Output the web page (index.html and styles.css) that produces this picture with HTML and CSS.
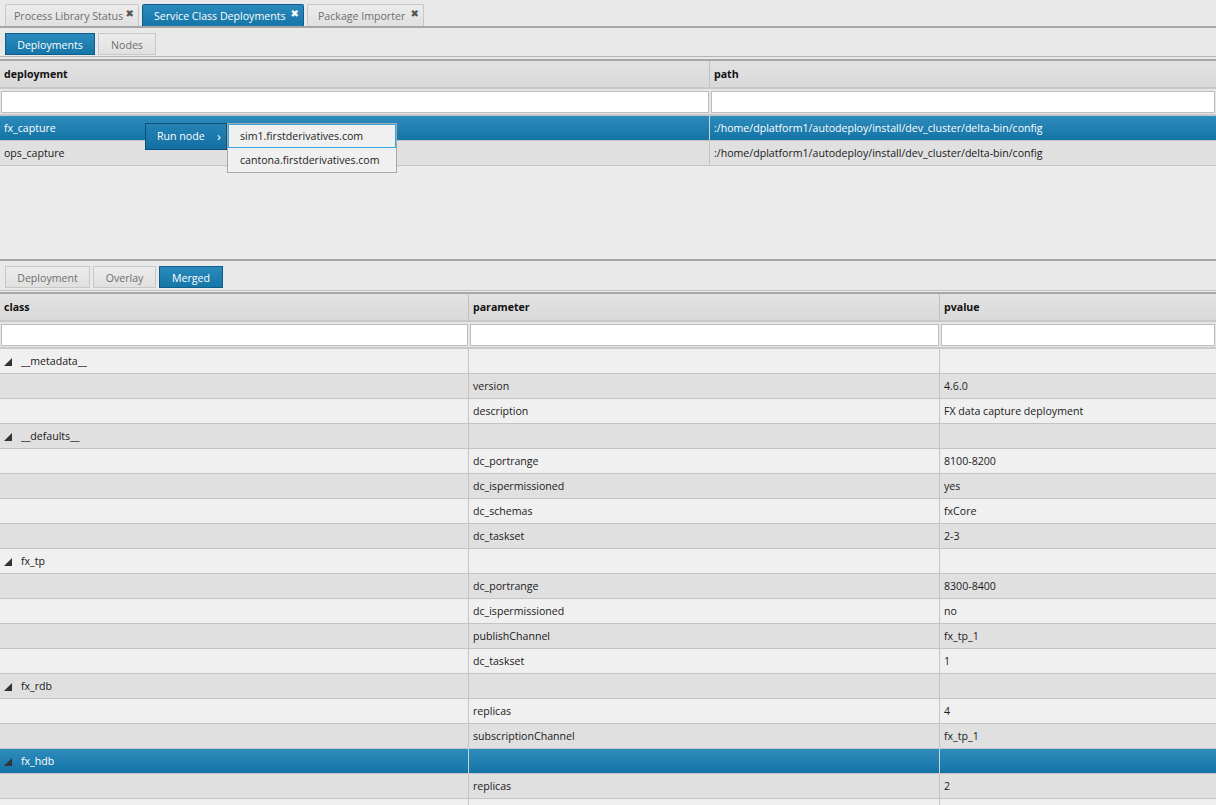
FILE: index.html
```html
<!DOCTYPE html>
<html>
<head>
  <title>Service Class Deployments</title>
  <link rel="stylesheet" href="styles.css">
</head>
<body>

<div class="tabbar main-tabs">
  <div class="tab"><span>Process Library Status</span><span class="close">&#10006;</span></div>
  <div class="tab active"><span>Service Class Deployments</span><span class="close">&#10006;</span></div>
  <div class="tab"><span>Package Importer</span><span class="close">&#10006;</span></div>
</div>

<div class="tabbar sub-tabs">
  <div class="tab active">Deployments</div>
  <div class="tab">Nodes</div>
</div>

<!-- deployments grid -->
<div class="grid top-grid">
  <div class="row head">
    <div class="cell">deployment</div>
    <div class="cell">path</div>
  </div>
  <div class="row filter">
    <div class="cell"><div class="input"></div></div>
    <div class="cell"><div class="input"></div></div>
  </div>
  <div class="row selected">
    <div class="cell">fx_capture</div>
    <div class="cell">:/home/dplatform1/autodeploy/install/dev_cluster/delta-bin/config</div>
  </div>
  <div class="row dark">
    <div class="cell">ops_capture</div>
    <div class="cell">:/home/dplatform1/autodeploy/install/dev_cluster/delta-bin/config</div>
  </div>
</div>

<div class="tabbar lower-tabs">
  <div class="tab">Deployment</div>
  <div class="tab">Overlay</div>
  <div class="tab active">Merged</div>
</div>

<!-- merged parameters grid -->
<div class="grid bottom-grid" id="paramGrid">
  <div class="row head">
    <div class="cell">class</div>
    <div class="cell">parameter</div>
    <div class="cell">pvalue</div>
  </div>
  <div class="row filter">
    <div class="cell"><div class="input"></div></div>
    <div class="cell"><div class="input"></div></div>
    <div class="cell"><div class="input"></div></div>
  </div>
</div>

<!-- context menu -->
<div class="menu">
  <div class="menu-item">Run node <span class="arrow">&rsaquo;</span></div>
  <div class="submenu">
    <div class="sub-item hover">sim1.firstderivatives.com</div>
    <div class="sub-item">cantona.firstderivatives.com</div>
  </div>
</div>

<script>
  // rows of the merged view: groups have no parameter
  const rows = [
    ['__metadata__'],
    ['', 'version', '4.6.0'],
    ['', 'description', 'FX data capture deployment'],
    ['__defaults__'],
    ['', 'dc_portrange', '8100-8200'],
    ['', 'dc_ispermissioned', 'yes'],
    ['', 'dc_schemas', 'fxCore'],
    ['', 'dc_taskset', '2-3'],
    ['fx_tp'],
    ['', 'dc_portrange', '8300-8400'],
    ['', 'dc_ispermissioned', 'no'],
    ['', 'publishChannel', 'fx_tp_1'],
    ['', 'dc_taskset', '1'],
    ['fx_rdb'],
    ['', 'replicas', '4'],
    ['', 'subscriptionChannel', 'fx_tp_1'],
    ['fx_hdb', null, null, true],
    ['', 'replicas', '2'],
    ['', '', '']
  ];

  const grid = document.getElementById('paramGrid');
  rows.forEach((r, i) => {
    const row = document.createElement('div');
    row.className = 'row ' + (r[3] ? 'selected' : (i % 2 ? 'dark' : 'light'));
    const first = document.createElement('div');
    first.className = 'cell';
    if (r.length === 1 || r[3]) {
      first.innerHTML = '<svg class="tri" width="8" height="8" viewBox="0 0 8 8"><polygon points="8,0 8,8 0,8"/></svg>' + r[0];
    }
    row.appendChild(first);
    for (let k = 1; k < 3; k++) {
      const c = document.createElement('div');
      c.className = 'cell';
      c.textContent = r[k] || '';
      row.appendChild(c);
    }
    grid.appendChild(row);
  });
</script>

</body>
</html>
```

FILE: styles.css
```css
/* Page */
body {
  margin: 0;
  width: 1216px;
  height: 805px;
  overflow: hidden;
  background-color: #e9e9e9;
  font-family: "Open Sans", "Noto Sans", sans-serif;
  font-size: 10.6px;
  color: #1a1a1a;
  position: relative;
}

/* Tab bars */
.tabbar {
  display: flex;
  align-items: flex-end;
  gap: 3px;
  padding-left: 5px;
  box-sizing: border-box;
}
.main-tabs {
  height: 28px;
  border-bottom: 2px solid #a6a6a6;
}
.sub-tabs {
  height: 29px;
  border-bottom: 1px solid #b4b4b4;
  background-color: #e9e9e9;
}
.lower-tabs {
  height: 32px;
  border-top: 2px solid #a6a6a6;
  border-bottom: 1px solid #c0c0c0;
  padding-bottom: 1px;
}
.tab {
  height: 22px;
  line-height: 22px;
  box-sizing: border-box;
  padding: 0 7px;
  border: 1px solid #c8c8c8;
  border-bottom: none;
  background: linear-gradient(#ececec, #e0e0e0);
  color: #6e6e6e;
  white-space: nowrap;
}
.main-tabs .tab {
  display: flex;
  justify-content: space-between;
  border-radius: 2px 2px 0 0;
  padding: 0 4px 0 8px;
}
.main-tabs .tab:nth-child(1) { width: 134px; }
.main-tabs .tab:nth-child(2) { width: 162px; padding-left: 11px; }
.main-tabs .tab:nth-child(3) { width: 117px; padding-left: 10px; }
.sub-tabs .tab:nth-child(1) { width: 90px; text-align: center; }
.sub-tabs .tab:nth-child(2) { width: 58px; text-align: center; }
.lower-tabs .tab:nth-child(1) { width: 85px; text-align: center; }
.lower-tabs .tab:nth-child(2) { width: 63px; text-align: center; }
.lower-tabs .tab:nth-child(3) { width: 64px; text-align: center; }
.sub-tabs .tab, .lower-tabs .tab {
  border-bottom: 1px solid #c8c8c8;
  margin-bottom: 1px;
}
.tab.active {
  background: linear-gradient(#2a8abb, #1576a8);
  border-color: #0f5d8c;
  color: #ffffff;
}
.close {
  font-size: 10px;
  color: #555;
  font-family: "DejaVu Sans", sans-serif;
  margin-top: -2px;
}
.tab.active .close {
  color: #ffffff;
}

/* Grids */
.grid {
  border-top: 2px solid #a6a6a6;
}
.top-grid {
  height: 198px;
  margin-top: 2px;
  background-color: #ebebeb;
}
.bottom-grid {
  margin-top: 1px;
}
.row {
  display: grid;
  height: 25px;
  box-sizing: border-box;
  border-bottom: 1px solid #c4c4c4;
}
.top-grid .row {
  grid-template-columns: 710px 1fr;
}
.bottom-grid .row {
  grid-template-columns: 469px 471px 1fr;
}
.cell {
  padding-left: 4px;
  line-height: 24px;
  white-space: nowrap;
  overflow: hidden;
  border-right: 1px solid #c4c4c4;
  box-sizing: border-box;
}
.cell:last-child {
  border-right: none;
}
.row.head {
  height: 28px;
  background: linear-gradient(#e2e2e2, #d9d9d9);
  font-weight: bold;
  color: #111;
  border-bottom: 2px solid #c8c8c8;
}
.row.head .cell {
  line-height: 27px;
  border-right-color: #c0c0c0;
}
.row.filter {
  height: 27px;
  background-color: #e6e6e6;
  border-bottom: 2px solid #c8c8c8;
}
.row.filter .cell {
  padding: 2px 1px 1px 1px;
  border-right: none;
}
.input {
  height: 100%;
  box-sizing: border-box;
  background-color: #ffffff;
  border: 1px solid #bdbdbd;
}
.row.light {
  background-color: #f0f0f0;
}
.row.dark {
  background-color: #e0e0e0;
}
.row.selected {
  background: linear-gradient(#2e8cbc, #1474a6);
  color: #ffffff;
  border-bottom-color: #c4c4c4;
}
.row.selected .cell {
  border-right-color: #d0d0d0;
}
.tri {
  fill: #333;
  margin: 0 9px 0 0;
  vertical-align: -1px;
}

/* Context menu */
.menu {
  position: absolute;
  left: 145px;
  top: 123px;
  display: flex;
  align-items: flex-start;
}
.menu-item {
  width: 82px;
  height: 27px;
  line-height: 25px;
  box-sizing: border-box;
  padding-left: 11px;
  background: linear-gradient(#2482b4, #1470a3);
  border: 1px solid #0d4f78;
  color: #ffffff;
}
.arrow {
  float: right;
  margin-right: 5px;
  font-size: 13px;
}
.submenu {
  width: 170px;
  box-sizing: border-box;
  background-color: #f0f0f0;
  border: 1px solid #a8a8a8;
}
.sub-item {
  height: 24px;
  line-height: 22px;
  padding-left: 11px;
  box-sizing: border-box;
  border: 1px solid transparent;
  color: #222;
}
.sub-item.hover {
  border-color: #3aa7e2;
}
```
